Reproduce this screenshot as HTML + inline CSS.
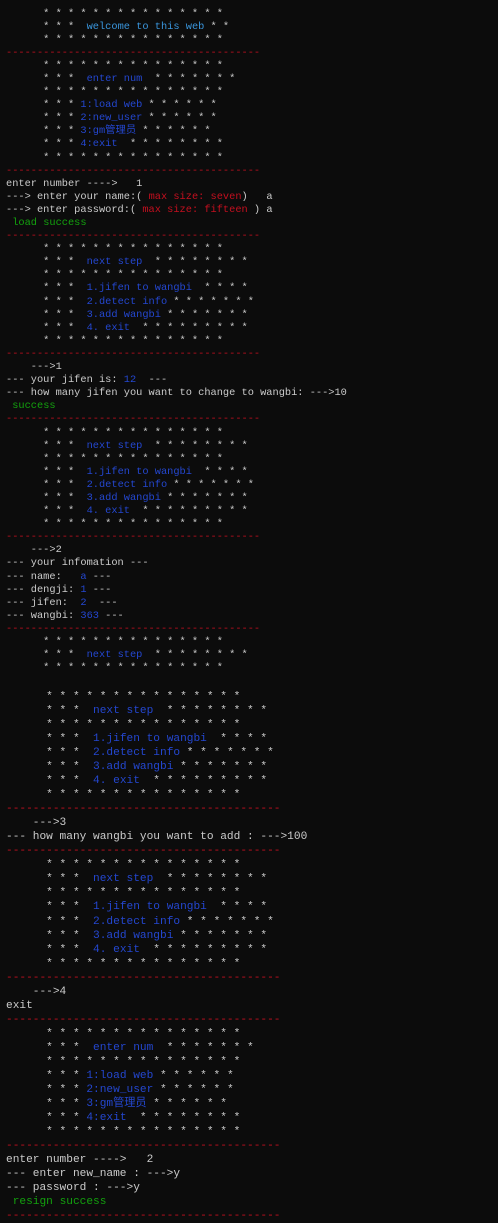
<!DOCTYPE html>
<html><head><meta charset="utf-8"><style>
html,body{margin:0;padding:0;background:#0c0c0c;width:498px;height:1216px;overflow:hidden}
pre{margin:0;position:absolute;left:6px;font-family:"Liberation Mono","Noto Sans CJK SC",monospace;color:#cccccc;white-space:pre}
#a{top:7.5px;font-size:10.33px;line-height:13.1px}
#b{top:690px;font-size:11.17px;line-height:14.03px}
.b{color:#2447d0}.w{color:#3a96dd}.r{color:#c50f1f}.g{color:#13a10e}
</style></head><body>
<pre id="a">      * * * * * * * * * * * * * * *
      * * *  <span class="w">welcome to this web</span> * *
      * * * * * * * * * * * * * * *
<span class="r">-----------------------------------------</span>
      * * * * * * * * * * * * * * *
      * * *  <span class="b">enter num</span>  * * * * * * *
      * * * * * * * * * * * * * * *
      * * * <span class="b">1:load web</span> * * * * * *
      * * * <span class="b">2:new_user</span> * * * * * *
      * * * <span class="b">3:gm管理员</span> * * * * * *
      * * * <span class="b">4:exit</span>  * * * * * * * *
      * * * * * * * * * * * * * * *
<span class="r">-----------------------------------------</span>
enter number ---->   1
---> enter your name:( <span class="r">max size: seven</span>)   a
---> enter password:( <span class="r">max size: fifteen</span> ) a
 <span class="g">load success</span>
<span class="r">-----------------------------------------</span>
      * * * * * * * * * * * * * * *
      * * *  <span class="b">next step</span>  * * * * * * * *
      * * * * * * * * * * * * * * *
      * * *  <span class="b">1.jifen to wangbi</span>  * * * *
      * * *  <span class="b">2.detect info</span> * * * * * * *
      * * *  <span class="b">3.add wangbi</span> * * * * * * *
      * * *  <span class="b">4. exit</span>  * * * * * * * * *
      * * * * * * * * * * * * * * *
<span class="r">-----------------------------------------</span>
    ---&gt;1
--- your jifen is: <span class="b">12</span>  ---
--- how many jifen you want to change to wangbi: ---&gt;10
 <span class="g">success</span>
<span class="r">-----------------------------------------</span>
      * * * * * * * * * * * * * * *
      * * *  <span class="b">next step</span>  * * * * * * * *
      * * * * * * * * * * * * * * *
      * * *  <span class="b">1.jifen to wangbi</span>  * * * *
      * * *  <span class="b">2.detect info</span> * * * * * * *
      * * *  <span class="b">3.add wangbi</span> * * * * * * *
      * * *  <span class="b">4. exit</span>  * * * * * * * * *
      * * * * * * * * * * * * * * *
<span class="r">-----------------------------------------</span>
    ---&gt;2
--- your infomation ---
--- name:   <span class="b">a</span> ---
--- dengji: <span class="b">1</span> ---
--- jifen:  <span class="b">2</span>  ---
--- wangbi: <span class="b">363</span> ---
<span class="r">-----------------------------------------</span>
      * * * * * * * * * * * * * * *
      * * *  <span class="b">next step</span>  * * * * * * * *
      * * * * * * * * * * * * * * *</pre>
<pre id="b">      * * * * * * * * * * * * * * *
      * * *  <span class="b">next step</span>  * * * * * * * *
      * * * * * * * * * * * * * * *
      * * *  <span class="b">1.jifen to wangbi</span>  * * * *
      * * *  <span class="b">2.detect info</span> * * * * * * *
      * * *  <span class="b">3.add wangbi</span> * * * * * * *
      * * *  <span class="b">4. exit</span>  * * * * * * * * *
      * * * * * * * * * * * * * * *
<span class="r">-----------------------------------------</span>
    ---&gt;3
--- how many wangbi you want to add : ---&gt;100
<span class="r">-----------------------------------------</span>
      * * * * * * * * * * * * * * *
      * * *  <span class="b">next step</span>  * * * * * * * *
      * * * * * * * * * * * * * * *
      * * *  <span class="b">1.jifen to wangbi</span>  * * * *
      * * *  <span class="b">2.detect info</span> * * * * * * *
      * * *  <span class="b">3.add wangbi</span> * * * * * * *
      * * *  <span class="b">4. exit</span>  * * * * * * * * *
      * * * * * * * * * * * * * * *
<span class="r">-----------------------------------------</span>
    ---&gt;4
exit
<span class="r">-----------------------------------------</span>
      * * * * * * * * * * * * * * *
      * * *  <span class="b">enter num</span>  * * * * * * *
      * * * * * * * * * * * * * * *
      * * * <span class="b">1:load web</span> * * * * * *
      * * * <span class="b">2:new_user</span> * * * * * *
      * * * <span class="b">3:gm管理员</span> * * * * * *
      * * * <span class="b">4:exit</span>  * * * * * * * *
      * * * * * * * * * * * * * * *
<span class="r">-----------------------------------------</span>
enter number ----&gt;   2
--- enter new_name : ---&gt;y
--- password : ---&gt;y
 <span class="g">resign success</span>
<span class="r">-----------------------------------------</span></pre>
</body></html>
